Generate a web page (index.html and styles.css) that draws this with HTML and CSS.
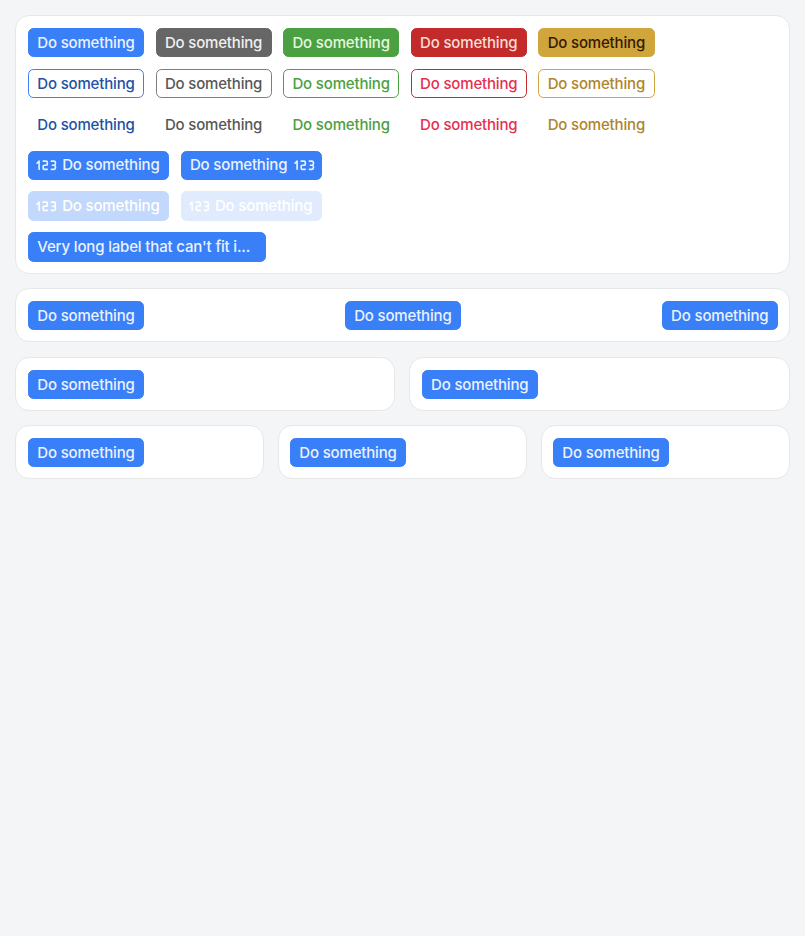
FILE: index.html
```
<!DOCTYPE html>
<html lang="en">
<head>
<meta charset="utf-8">
<title>Buttons</title>
<link rel="stylesheet" href="styles.css">
</head>
<body>
<svg class="defs" aria-hidden="true">
<symbol id="i123" viewBox="0 0 24 24"><path d="M3 10l2-2v8M9 8h3a1 1 0 0 1 1 1v2a1 1 0 0 1-1 1h-2a1 1 0 0 0-1 1v2a1 1 0 0 0 1 1h3M17 8h2.5a1.5 1.5 0 0 1 1.5 1.5v1a1.5 1.5 0 0 1-1.5 1.5H18h1.5a1.5 1.5 0 0 1 1.5 1.5v1a1.5 1.5 0 0 1-1.5 1.5H17"/></symbol>
</svg>
<main class="page">
  <section class="card stack">
    <div class="row">
      <button class="btn primary"><span>Do something</span></button>
      <button class="btn secondary"><span>Do something</span></button>
      <button class="btn success"><span>Do something</span></button>
      <button class="btn danger"><span>Do something</span></button>
      <button class="btn warning"><span>Do something</span></button>
    </div>
    <div class="row">
      <button class="btn outline primary"><span>Do something</span></button>
      <button class="btn outline secondary"><span>Do something</span></button>
      <button class="btn outline success"><span>Do something</span></button>
      <button class="btn outline danger"><span>Do something</span></button>
      <button class="btn outline warning"><span>Do something</span></button>
    </div>
    <div class="row">
      <button class="btn outline ghost primary"><span>Do something</span></button>
      <button class="btn outline ghost secondary"><span>Do something</span></button>
      <button class="btn outline ghost success"><span>Do something</span></button>
      <button class="btn outline ghost danger"><span>Do something</span></button>
      <button class="btn outline ghost warning"><span>Do something</span></button>
    </div>
    <div class="row">
      <button class="btn primary with-icon"><svg class="icon"><use href="#i123"/></svg><span>Do something</span></button>
      <button class="btn primary with-icon end"><span>Do something</span><svg class="icon"><use href="#i123"/></svg></button>
    </div>
    <div class="row">
      <button class="btn primary with-icon disabled"><svg class="icon"><use href="#i123"/></svg><span>Do something</span></button>
      <button class="btn primary with-icon faint"><svg class="icon"><use href="#i123"/></svg><span>Do something</span></button>
    </div>
    <div class="row">
      <button class="btn primary long"><span>Very long label that can't fit i...</span></button>
    </div>
  </section>
  <section class="card spread">
    <button class="btn primary"><span>Do something</span></button>
    <button class="btn primary"><span>Do something</span></button>
    <button class="btn primary"><span>Do something</span></button>
  </section>
  <div class="columns two">
    <section class="card"><button class="btn primary"><span>Do something</span></button></section>
    <section class="card"><button class="btn primary"><span>Do something</span></button></section>
  </div>
  <div class="columns three">
    <section class="card"><button class="btn primary"><span>Do something</span></button></section>
    <section class="card"><button class="btn primary"><span>Do something</span></button></section>
    <section class="card"><button class="btn primary"><span>Do something</span></button></section>
  </div>
</main>
</body>
</html>
```
FILE: styles.css
```
* { box-sizing: border-box; }
body { margin: 0; background: #f4f5f7; font-family: Inter, "Liberation Sans", sans-serif; }
.defs { position: absolute; width: 0; height: 0; }
.page { display: flex; flex-direction: column; gap: 14.6px; padding: 15px 15.4px 15px 14.6px; }
.card { min-width: 0; padding: 11.6px 11.2px 11.1px 12.4px; background: #fff; border: 1px solid #e6e7e9; border-radius: 14px; }
.stack { display: flex; flex-direction: column; gap: 11.6px; padding: 12px 11.2px 10.85px 12.4px; }
.row { display: flex; gap: 11.6px; }
.spread { display: flex; justify-content: space-between; padding-right: 10.8px; }
.columns { display: grid; gap: 14.6px; }
.columns .card + .card { padding-left: 11.4px; }
.two { grid-template-columns: 1fr 1fr; }
.two .card { padding-top: 12.1px; padding-bottom: 10.6px; }
.three { grid-template-columns: repeat(3, 1fr); gap: 14.1px; }

.btn { display: flex; align-items: center; width: 116px; height: 29.25px; margin: 0; padding: 0 8.3px; border: 1px solid var(--fill); border-radius: 5.5px; background: var(--fill); color: var(--on); font: 500 15px/20px Inter, "Liberation Sans", sans-serif; letter-spacing: -0.17px; white-space: nowrap; }
.btn > span { padding-top: 0.6px; }
.primary { --fill: #397ff7; --on: #ebf2ff; --tone: #2251a6; }
.secondary { --fill: #666; --on: #f0f0f0; --tone: #575757; }
.success { --fill: #4ba041; --on: #e6f8df; --tone: #4ba041; }
.danger { --fill: #c22b29; --on: #fbdcd8; --tone: #e5304f; }
.warning { --fill: #d0a53b; --on: #361900; --tone: #ae842d; width: 116.6px; }
.outline { background: transparent; color: var(--tone); }
.outline.secondary { border-color: #7d7d7d; }
.btn.ghost { border-color: transparent; }
.with-icon { width: 141.2px; padding: 0 8px 0 5px; gap: 4.7px; }
.end { padding: 0 4px 0 8.2px; gap: 5.3px; }
.icon { flex: none; width: 24.5px; height: 24.5px; margin-right: -1px; fill: none; stroke: currentColor; stroke-width: 1.6; stroke-linecap: round; stroke-linejoin: round; }
.end .icon { margin: 0 0 0 -1px; }
.disabled { opacity: .3; }
.disabled, .faint { --on: #fff; }
.faint { opacity: .15; }
.long { width: 238px; height: 29.6px; letter-spacing: -0.16px; }
```
